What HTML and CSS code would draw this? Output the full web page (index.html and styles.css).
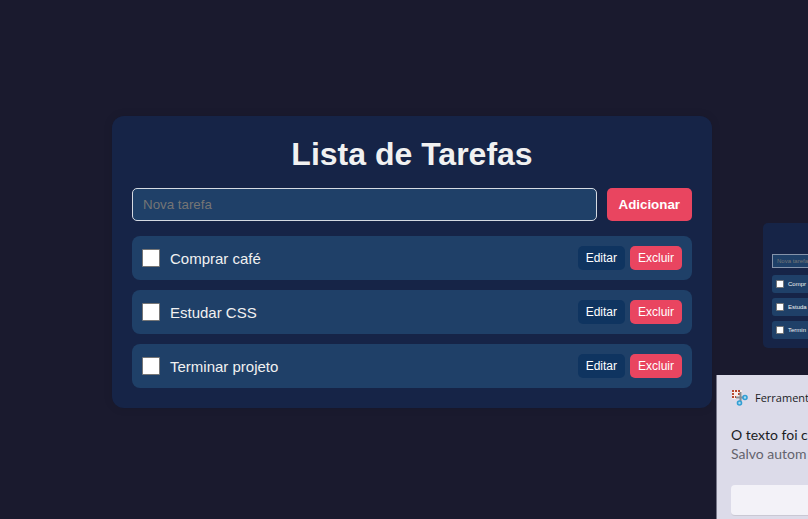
FILE: index.html
```html
<!DOCTYPE html>
<html lang="pt-BR">
<head>
<meta charset="utf-8">
<meta name="viewport" content="width=device-width, initial-scale=1">
<title>Lista de Tarefas</title>
<link rel="stylesheet" href="styles.css">
</head>
<body>
<main class="card">
  <h1>Lista de Tarefas</h1>
  <form class="new-task">
    <input type="text" class="new-input" placeholder="Nova tarefa" aria-label="Nova tarefa">
    <button type="button" class="add">Adicionar</button>
  </form>
  <ul class="tasks">
    <li class="task">
      <input type="checkbox" class="check" id="t1">
      <label for="t1">Comprar café</label>
      <button type="button" class="action edit">Editar</button>
      <button type="button" class="action delete">Excluir</button>
    </li>
    <li class="task">
      <input type="checkbox" class="check" id="t2">
      <label for="t2">Estudar CSS</label>
      <button type="button" class="action edit">Editar</button>
      <button type="button" class="action delete">Excluir</button>
    </li>
    <li class="task">
      <input type="checkbox" class="check" id="t3">
      <label for="t3">Terminar projeto</label>
      <button type="button" class="action edit">Editar</button>
      <button type="button" class="action delete">Excluir</button>
    </li>
  </ul>
</main>

<aside class="preview">
  <input type="text" class="mini-input" placeholder="Nova tarefa" aria-label="Nova tarefa">
  <div class="mini-task"><input type="checkbox" class="mini-check" id="m1"><label for="m1">Compr</label></div>
  <div class="mini-task"><input type="checkbox" class="mini-check" id="m2"><label for="m2">Estuda</label></div>
  <div class="mini-task"><input type="checkbox" class="mini-check" id="m3"><label for="m3">Termin</label></div>
</aside>

<aside class="toast">
  <header class="toast-head">
    <svg class="toast-icon" viewBox="0 0 17 17" aria-hidden="true">
      <rect x="1" y="1" width="10" height="9" fill="#f7ece9"/>
      <path d="M1 2H9M2 4V9" fill="none" stroke="#b9482c" stroke-width="2" stroke-dasharray="2 1"/>
      <path d="M8 4V6M4 8H5" fill="none" stroke="#b9482c" stroke-width="2"/>
      <path d="M9.500 3V12M5 8.500H13" fill="none" stroke="#858d94" stroke-width="2"/>
      <circle cx="8.500" cy="14" r="2" fill="#a9d9ef" stroke="#329fd4" stroke-width="1.600"/>
      <circle cx="14" cy="8.500" r="2" fill="#a9d9ef" stroke="#329fd4" stroke-width="1.600"/>
    </svg>
    <span>Ferrament</span>
  </header>
  <p class="toast-title">O texto foi c</p>
  <p class="toast-text">Salvo autom</p>
  <button type="button" class="toast-button" aria-label="Abrir"></button>
</aside>
</body>
</html>
```
FILE: styles.css
```css
* {
  box-sizing: border-box;
}

body {
  position: relative;
  min-height: 100vh;
  margin: 0;
  padding: 116px 16px 0 32px;
  overflow: hidden;
  background: #1a1a2e;
  color: #f1f1f1;
  font-family: "Liberation Sans", Arial, sans-serif;
}

.card {
  max-width: 600px;
  margin: 0 auto;
  padding: 20px;
  border-radius: 12px;
  background: #162447;
  box-shadow: 0 0 10px rgba(0, 0, 0, 0.1);
}

h1 {
  margin: 0 0 15px;
  font-size: 32px;
  line-height: 37px;
  text-align: center;
}

.new-task {
  display: flex;
  gap: 10px;
  margin-bottom: 15px;
}

.new-input {
  flex: 1;
  min-width: 0;
  height: 33px;
  padding: 0 10px;
  border: 1px solid #d5dae2;
  border-radius: 5px;
  background: #1f4068;
  color: #f1f1f1;
  font-family: inherit;
}

.new-input::placeholder,
.mini-input::placeholder {
  color: #757575;
}

button {
  border: 0;
  border-radius: 5px;
  color: #fff;
  font-family: inherit;
}

.add {
  padding: 0 12px;
  background: #e94560;
  font-weight: bold;
}

.tasks {
  display: flex;
  flex-direction: column;
  gap: 10px;
  margin: 0;
  padding: 0;
  list-style: none;
}

.task {
  display: flex;
  align-items: center;
  padding: 10px;
  border-radius: 8px;
  background: #1f4068;
}

.check,
.mini-check {
  flex: none;
  appearance: none;
  width: 18px;
  height: 18px;
  margin: 0 10px 0 0;
  border: 1px solid #767676;
  border-radius: 1px;
  background: #fff;
}

.task label {
  flex: 1;
  font-size: 15px;
}

.action {
  height: 24px;
  padding: 0 8px;
  font-size: 12px;
}

.edit {
  margin-right: 5px;
  background: #0f3460;
}

.delete {
  background: #e94560;
}

.preview {
  position: absolute;
  top: 223px;
  right: 0;
  display: flex;
  flex-direction: column;
  gap: 5px;
  width: 45px;
  padding: 31px 0 9px 9px;
  overflow: hidden;
  border-radius: 5px 0 0 5px;
  background: #162447;
}

.mini-input {
  width: 100%;
  height: 14px;
  margin-bottom: 2px;
  padding: 0 0 0 4px;
  border: 1px solid #8593aa;
  border-right: 0;
  background: #1f4068;
  color: #f1f1f1;
  font: 6px "Liberation Sans", Arial, sans-serif;
}

.mini-task {
  display: flex;
  align-items: center;
  height: 18px;
  padding-left: 4px;
  border-radius: 3px 0 0 3px;
  background: #1f4068;
  font-size: 6px;
  white-space: nowrap;
}

.mini-check {
  width: 8px;
  height: 8px;
  margin-right: 4px;
}

.toast {
  position: absolute;
  top: 375px;
  right: 0;
  bottom: 0;
  width: 92px;
  padding: 14px 0 0 14px;
  overflow: hidden;
  border-left: 1px solid #777789;
  background: #dcdbe9;
  color: #1b1b1f;
  font-family: "Open Sans", "Noto Sans", sans-serif;
  white-space: nowrap;
}

.toast-head {
  display: flex;
  align-items: center;
  gap: 7px;
  height: 17px;
  margin-bottom: 19px;
  font-size: 11px;
}

.toast-icon {
  flex: none;
  width: 17px;
  height: 17px;
}

.toast p {
  margin: 0;
  font-family: Lato, "Open Sans", sans-serif;
  font-size: 14px;
  line-height: 19px;
}

.toast .toast-text {
  color: #64636d;
}

.toast-button {
  display: block;
  width: 100%;
  height: 31px;
  margin-top: 22px;
  border-bottom: 1px solid #c9c8d4;
  border-radius: 4px 0 0 4px;
  background: #f3f2f8;
}
```
